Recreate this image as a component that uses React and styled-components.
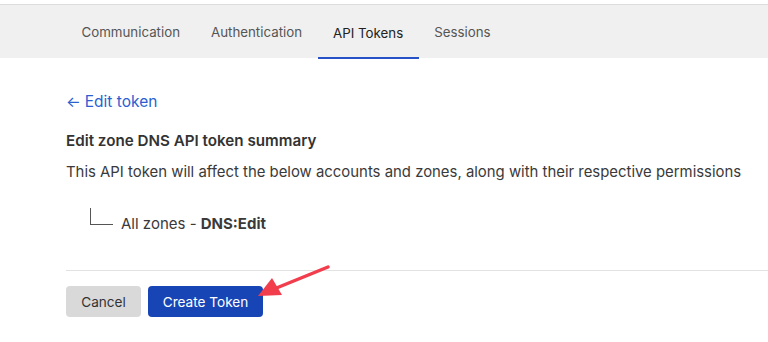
import React from "react";
import styled, { createGlobalStyle } from "styled-components";

const Global = createGlobalStyle`
  html, body { margin: 0; padding: 0; background: #fff; }
  body { font-family: Inter, "Liberation Sans", Arial, sans-serif; color: #333; }
`;

const Page = styled.div`
  position: relative;
  width: 768px;
  height: 342px;
  overflow: hidden;
  padding-top: 4px;
  box-sizing: border-box;
`;

const TabBar = styled.nav`
  display: flex;
  height: 54px;
  padding-left: 66px;
  background: #f0f0f0;
  border-top: 1px solid #dcdcdc;
  box-sizing: border-box;
`;

const Tab = styled.div`
  display: flex;
  align-items: center;
  padding: 0 15.5px;
  font-size: 13.3px;
  color: ${(p) => (p.$active ? "#222" : "#555")};
  box-shadow: ${(p) => (p.$active ? "inset 0 -2px 0 #2553c7" : "none")};
  margin-bottom: ${(p) => (p.$active ? "-1px" : "0")};
  padding-top: 1px;
`;

const Content = styled.main`
  display: flex;
  flex-direction: column;
  padding: 35px 0 0 66px;
`;

const BackLink = styled.a`
  font-size: 15.5px;
  color: #2b5fd1;
  text-decoration: none;
  line-height: 18px;
  display: flex;
  gap: 4px;
  align-items: center;
`;

const Heading = styled.h2`
  margin: 21px 0 0;
  font-size: 15.2px;
  font-weight: 600;
  color: #333;
  line-height: 18px;
`;

const Description = styled.p`
  margin: 13px 0 0;
  font-size: 14.9px;
  color: #3a3a3a;
  line-height: 18px;
`;

const TreeItem = styled.div`
  display: flex;
  align-items: flex-end;
  margin: 27px 0 0 24px;
  font-size: 15px;
  color: #3a3a3a;
  line-height: 18px;
`;

const Elbow = styled.span`
  width: 23px;
  height: 17px;
  border-left: 1px solid #555;
  border-bottom: 1px solid #555;
  margin-right: 8px;
  margin-bottom: 8px;
  box-sizing: border-box;
`;

const Divider = styled.hr`
  margin: 37px 0 0;
  border: 0;
  border-top: 1px solid #e2e2e2;
`;

const Actions = styled.div`
  display: flex;
  gap: 7px;
  margin-top: 15px;
`;

const Button = styled.button`
  height: 31px;
  padding: 0;
  border: 0;
  border-radius: 4px;
  font-family: inherit;
  font-size: 13.6px;
  background: ${(p) => (p.$primary ? "#1845b5" : "#d9d9d9")};
  color: ${(p) => (p.$primary ? "#fff" : "#333")};
  width: ${(p) => p.$w}px;
`;

const Arrow = styled.svg`
  position: absolute;
  left: 250px;
  top: 258px;
  overflow: visible;
`;

export default function App() {
  return (
    <Page>
      <Global />
      <TabBar>
        <Tab>Communication</Tab>
        <Tab>Authentication</Tab>
        <Tab $active>API Tokens</Tab>
        <Tab>Sessions</Tab>
      </TabBar>
      <Content>
        <BackLink href="#">
          <span>←</span>
          <span>Edit token</span>
        </BackLink>
        <Heading>Edit zone DNS API token summary</Heading>
        <Description>
          This API token will affect the below accounts and zones, along with their respective permissions
        </Description>
        <TreeItem>
          <Elbow />
          <span>
            All zones - <b>DNS:Edit</b>
          </span>
        </TreeItem>
        <Divider />
        <Actions>
          <Button $w={75}>Cancel</Button>
          <Button $primary $w={115}>Create Token</Button>
        </Actions>
      </Content>
      <Arrow width="90" height="50" viewBox="0 0 90 50">
        <line x1="78" y1="9" x2="24" y2="31" stroke="#f23d4d" strokeWidth="3.5" strokeLinecap="round" />
        <polygon points="8,38 22,20 32,37" fill="#f23d4d" />
      </Arrow>
    </Page>
  );
}
